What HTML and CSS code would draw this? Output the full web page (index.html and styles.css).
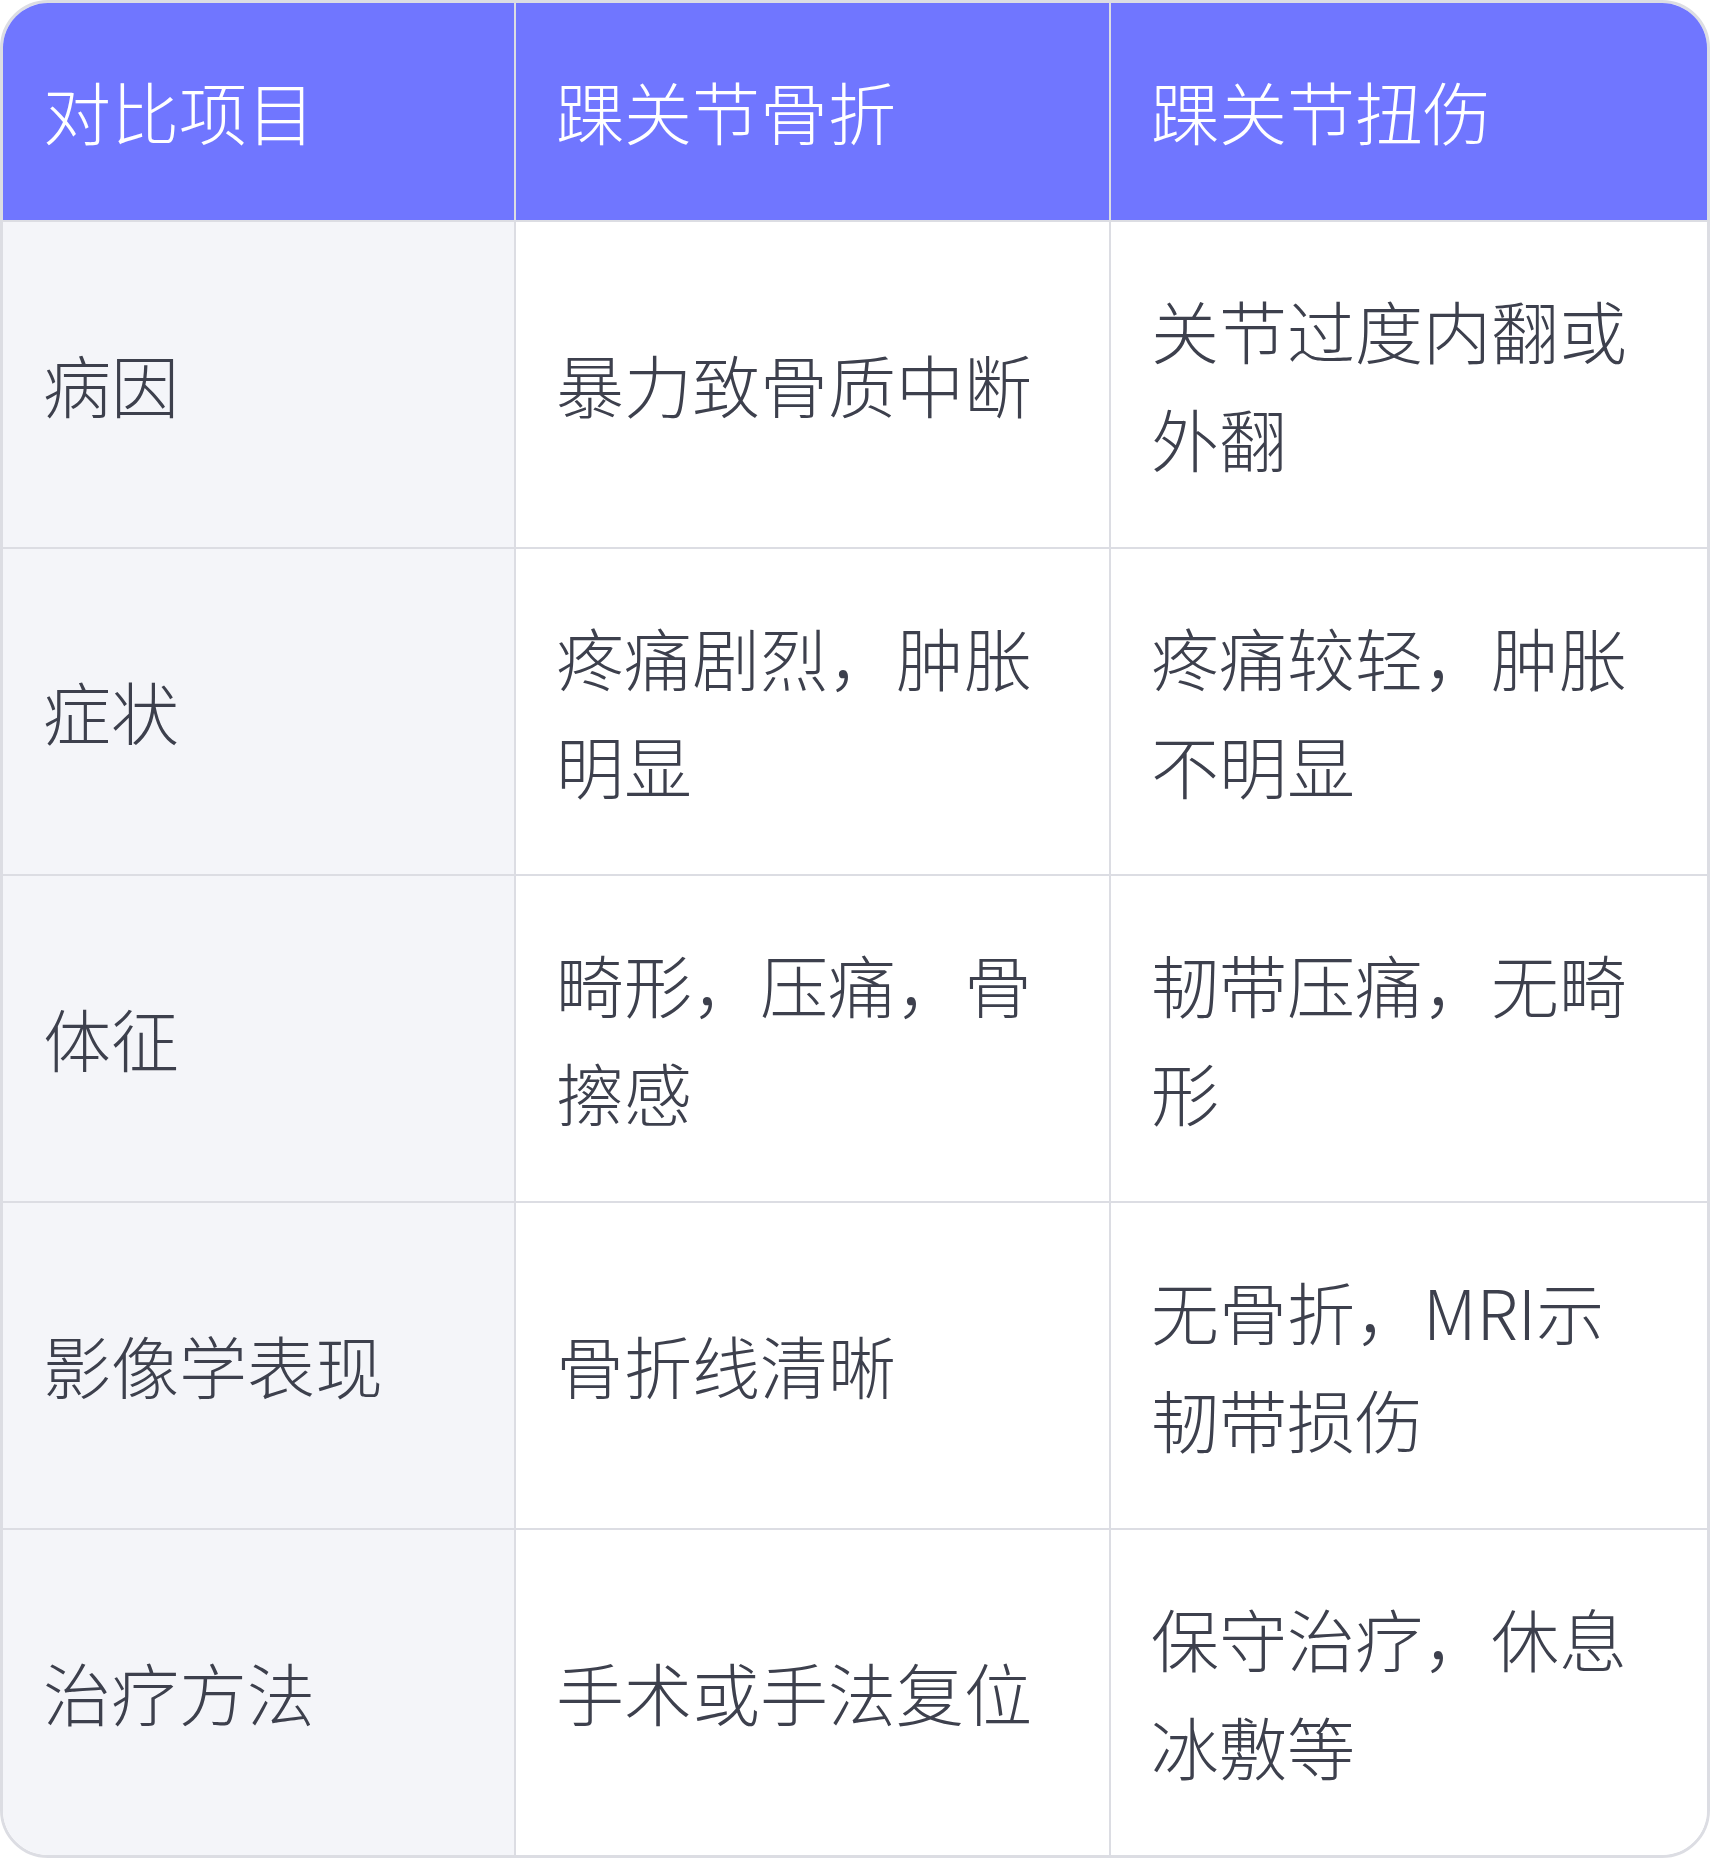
FILE: index.html
```html
<!DOCTYPE html>
<html lang="zh-CN">
<head>
<meta charset="utf-8">
<title>踝关节骨折与扭伤对比</title>
<link rel="stylesheet" href="styles.css">
</head>
<body>
<div class="table-wrap">
  <table class="compare">
    <colgroup>
      <col class="c1"><col class="c2"><col class="c3">
    </colgroup>
    <thead>
      <tr><th>对比项目</th><th>踝关节骨折</th><th>踝关节扭伤</th></tr>
    </thead>
    <tbody>
      <tr><td class="label">病因</td><td>暴力致骨质中断</td><td>关节过度内翻或外翻</td></tr>
      <tr><td class="label">症状</td><td>疼痛剧烈，肿胀明显</td><td>疼痛较轻，肿胀不明显</td></tr>
      <tr><td class="label">体征</td><td>畸形，压痛，骨擦感</td><td>韧带压痛，无畸形</td></tr>
      <tr><td class="label">影像学表现</td><td>骨折线清晰</td><td>无骨折，MRI示韧带损伤</td></tr>
      <tr><td class="label">治疗方法</td><td>手术或手法复位</td><td>保守治疗，休息冰敷等</td></tr>
    </tbody>
  </table>
</div>
</body>
</html>
```
FILE: styles.css
```css
html, body {
  margin: 0;
  padding: 0;
  background: #ffffff;
}
body {
  font-family: "Noto Sans CJK SC", "Noto Sans", sans-serif;
}
.table-wrap {
  width: 1710px;
  height: 1858px;
  box-sizing: border-box;
  border: 3px solid #dcdde3;
  border-radius: 48px;
  overflow: hidden;
}
.compare {
  width: 100%;
  border-collapse: separate;
  border-spacing: 0;
  table-layout: fixed;
}
.c1 { width: 513px; }
.c2 { width: 595px; }
.c3 { width: auto; }
.compare th,
.compare td {
  font-size: 68px;
  line-height: 108.5px;
  font-weight: 300;
  padding: 54px 40px;
  text-align: left;
  vertical-align: middle;
  border-right: 2px solid #dcdde3;
  border-bottom: 2px solid #dcdde3;
  word-break: break-all;
}
.compare th:last-child,
.compare td:last-child {
  border-right: none;
}
.compare tbody tr:last-child td {
  border-bottom: none;
}
.compare th {
  background: #7076ff;
  color: #ffffff;
  height: 108.5px;
}
.compare td {
  color: #3d404d;
  background: #ffffff;
  height: 217px;
}
.compare td.label {
  background: #f4f5f9;
}
```
